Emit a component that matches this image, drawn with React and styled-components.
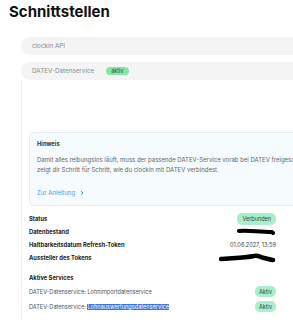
import React from 'react'
import styled, { createGlobalStyle } from 'styled-components'

const GlobalStyle = createGlobalStyle`
    html, body {
        margin: 0;
        background: #ffffff;
        overflow: hidden;
    }
    body {
        font-family: Inter, "Noto Sans", sans-serif;
        color: #2b2b2b;
    }
`

const Page = styled.div`
    width: 293px;
    height: 320px;
    overflow: hidden;
    padding: 3px 0 0 9px;
    box-sizing: border-box;
`

const Title = styled.h1`
    margin: 0;
    font-size: 15px;
    font-weight: 700;
    color: #111;
    line-height: 18px;
`

const Panels = styled.div`
    margin: 16px 0 0 12px;
    width: 340px;
    display: flex;
    flex-direction: column;
    gap: 7px;
`

const Bar = styled.div`
    height: 18px;
    border-radius: 9px;
    background: #f4f4f4;
    display: flex;
    align-items: center;
    gap: 12px;
    padding-left: 11px;
    font-size: 6.3px;
    color: #8c8c8c;
`

const Pill = styled.span`
    display: inline-flex;
    align-items: center;
    justify-content: center;
    height: ${p => p.$h || 9}px;
    padding: 0 ${p => p.$px || 5}px;
    border-radius: 5px;
    background: ${p => p.$bg || '#aaeecb'};
    color: #2c4a38;
    font-size: ${p => p.$fs || 5.5}px;
`

const Panel = styled.div`
    display: flex;
    flex-direction: column;
`

const PanelBody = styled.div`
    border-left: 1px solid #f1f1f1;
    padding: 52px 0 20px 7px;
    display: flex;
    flex-direction: column;
`

const Notice = styled.div`
    height: 74px;
    box-sizing: border-box;
    border: 1px solid #e4edf2;
    border-radius: 5px;
    background: #f6fbfe;
    padding: 7px 7px 0 7px;
    display: flex;
    flex-direction: column;
`

const NoticeTitle = styled.div`
    font-size: 5.8px;
    font-weight: 700;
    color: #333;
    line-height: 8px;
`

const NoticeText = styled.p`
    margin: 7px 0 0;
    font-size: 6px;
    line-height: 10px;
    color: #666;
    white-space: nowrap;
`

const Link = styled.a`
    margin-top: 14px;
    display: flex;
    align-items: center;
    gap: 5px;
    font-size: 6px;
    color: #3aa3e3;
    text-decoration: none;
`

const Details = styled.div`
    width: 247px;
    margin-top: 6px;
    display: flex;
    flex-direction: column;
`

const Row = styled.div`
    height: ${p => p.$h || 13}px;
    display: flex;
    align-items: center;
    justify-content: space-between;
    font-size: 5.6px;
`

const Label = styled.span`
    font-weight: 700;
    font-size: 5.8px;
    color: #1d1d1d;
`

const Value = styled.span`
    color: #444;
`

const SectionTitle = styled.div`
    margin-top: 7px;
    height: 13px;
    display: flex;
    align-items: center;
    font-size: 5.8px;
    font-weight: 700;
    color: #1d1d1d;
`

const ServiceName = styled.span`
    color: #555;
`

const Selected = styled.span`
    background: #3d74dc;
    color: #ffffff;
`

const Scribble = ({ w, h, d, sw }) => (
    <svg width={w} height={h} viewBox={`0 0 ${w} ${h}`}>
        <path d={d} stroke="#000" strokeWidth={sw} fill="none" strokeLinecap="round" strokeLinejoin="round" />
    </svg>
)

const Chevron = () => (
    <svg width="4" height="6" viewBox="0 0 4 6">
        <path d="M1 1 L3 3 L1 5" stroke="#3aa3e3" strokeWidth="1" fill="none" />
    </svg>
)

const App = () => (
    <Page>
        <GlobalStyle />
        <Title>Schnittstellen</Title>
        <Panels>
            <Bar>clockin API</Bar>
            <Panel>
                <Bar>
                    DATEV-Datenservice
                    <Pill $h={8} $px={5} $bg="#86e6a8">aktiv</Pill>
                </Bar>
                <PanelBody>
                    <Notice>
                        <NoticeTitle>Hinweis</NoticeTitle>
                        <NoticeText>
                            Damit alles reibungslos läuft, muss der passende DATEV-Service vorab bei DATEV freigeschaltet werden.
                            <br />
                            zeigt dir Schritt für Schritt, wie du clockin mit DATEV verbindest.
                        </NoticeText>
                        <Link href="#">Zur Anleitung <Chevron /></Link>
                    </Notice>
                    <Details>
                        <Row $h={13}>
                            <Label>Status</Label>
                            <Pill $h={12} $px={5} $fs={5.5}>Verbunden</Pill>
                        </Row>
                        <Row $h={13}>
                            <Label>Datenbestand</Label>
                            <Scribble w={40} h={7} sw={4} d="M3 3 C12 2 22 4 36 4 L37 5" />
                        </Row>
                        <Row $h={13}>
                            <Label>Haltbarkeitsdatum Refresh-Token</Label>
                            <Value>01.06.2027, 13:59</Value>
                        </Row>
                        <Row $h={13}>
                            <Label>Aussteller des Tokens</Label>
                            <Scribble w={58} h={11} sw={4.5} d="M3 7 C14 6 26 6 36 4 C40 3 42 5 46 6 C50 7 53 8 55 8" />
                        </Row>
                        <SectionTitle>Aktive Services</SectionTitle>
                        <Row $h={15}>
                            <ServiceName>DATEV-Datenservice: Lohnimportdatenservice</ServiceName>
                            <Pill $h={11} $px={4}>Aktiv</Pill>
                        </Row>
                        <Row $h={15}>
                            <ServiceName>DATEV-Datenservice: <Selected>Lohnauswertungsdatenservice</Selected></ServiceName>
                            <Pill $h={11} $px={4}>Aktiv</Pill>
                        </Row>
                    </Details>
                </PanelBody>
            </Panel>
        </Panels>
    </Page>
)

export default App
